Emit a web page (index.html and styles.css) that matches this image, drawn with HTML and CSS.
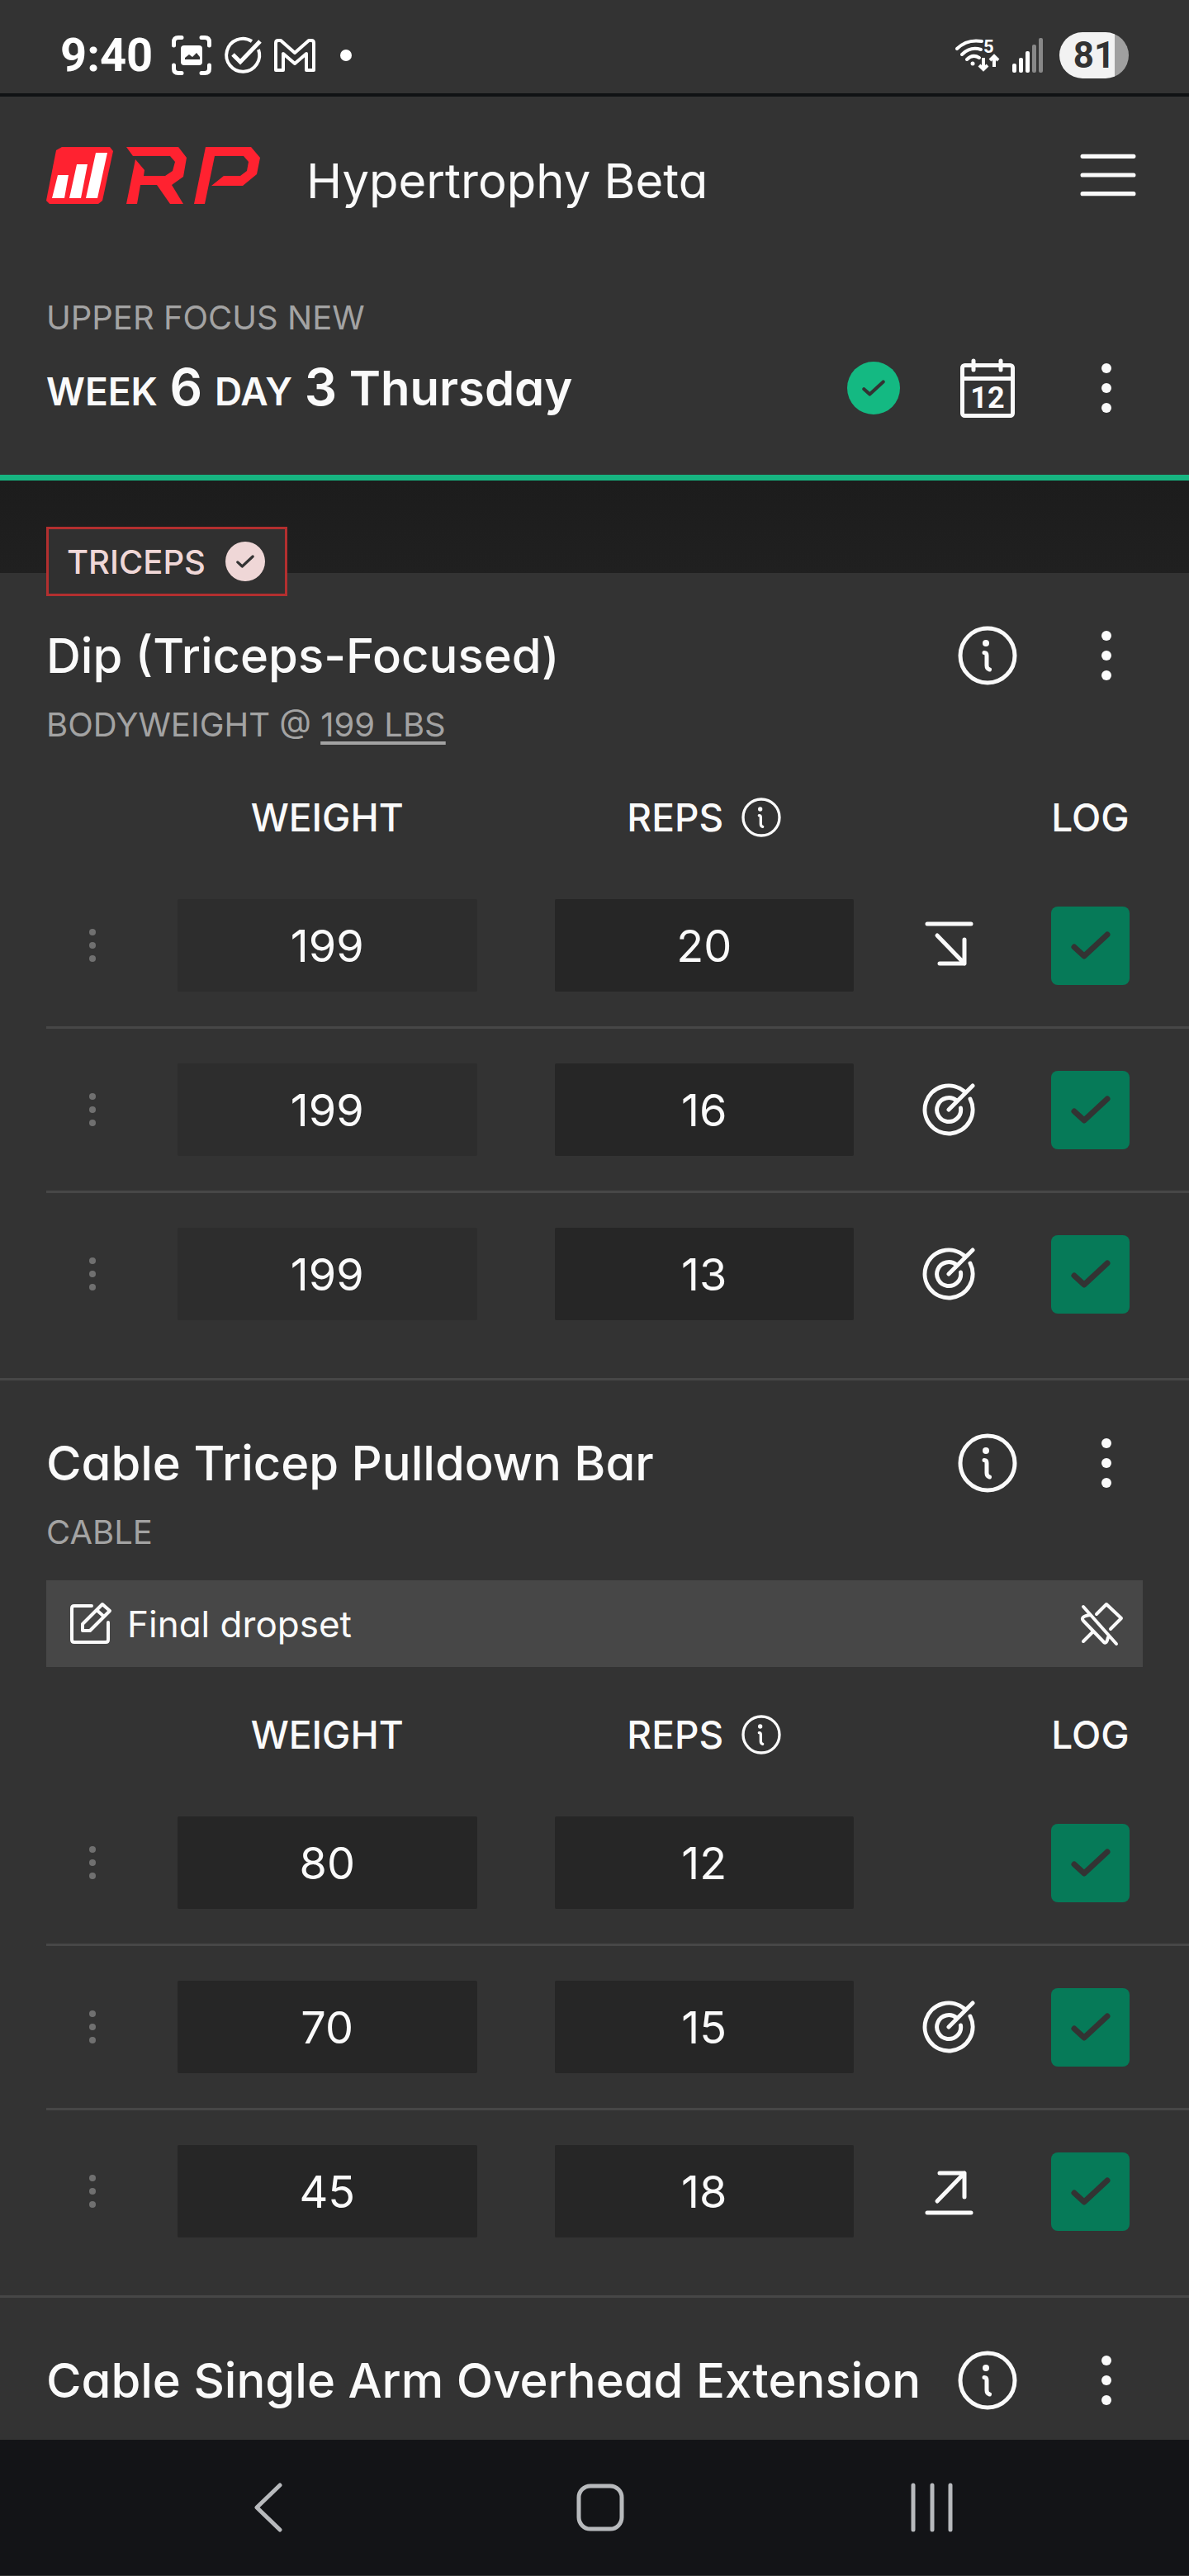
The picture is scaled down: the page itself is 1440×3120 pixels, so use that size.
FILE: index.html
```html
<!DOCTYPE html>
<html lang="en">
<head>
<meta charset="utf-8">
<meta name="viewport" content="width=device-width, initial-scale=1">
<title>Hypertrophy Beta</title>
<link rel="stylesheet" href="styles.css">
</head>
<body>
<svg class="sprite" aria-hidden="true">
  <symbol id="dots" viewBox="0 0 12 60"><circle cx="6" cy="6" r="6"/><circle cx="6" cy="30" r="6"/><circle cx="6" cy="54" r="6"/></symbol>
  <symbol id="info" viewBox="0 0 72 72"><circle cx="36" cy="36" r="33" fill="none" stroke="currentColor" stroke-width="5"/><circle cx="34" cy="21" r="4"/><path d="M32 32.500Q35 32.500 35 36V48Q35 52 38.500 53" fill="none" stroke="currentColor" stroke-width="5" stroke-linecap="round"/></symbol>
  <symbol id="tick" viewBox="0 0 48 36"><path d="M4 20L16 31L44 5" fill="none" stroke="currentColor" stroke-width="7" stroke-linecap="round" stroke-linejoin="round"/></symbol>
  <symbol id="target" viewBox="0 0 64 64"><path d="M51 10A29 29 0 1 0 58 19M41.500 21A14.500 14.500 0 1 0 46.500 30M32 32L61 3" fill="none" stroke="currentColor" stroke-width="5" stroke-linecap="round"/></symbol>
  <symbol id="below" viewBox="0 0 64 64"><path d="M6 6H59M18 20L51 54M51 25V54H21" fill="none" stroke="currentColor" stroke-width="5" stroke-linecap="round" stroke-linejoin="round"/></symbol>
  <symbol id="above" viewBox="0 0 64 64"><path d="M6 58H59M18 44L51 10M51 39V10H21" fill="none" stroke="currentColor" stroke-width="5" stroke-linecap="round" stroke-linejoin="round"/></symbol>
</svg>

<div class="status">
  <div class="status-group">
    <span class="clock">9:40</span>
    <svg class="line s-shot" viewBox="0 0 48 48" stroke-width="5" stroke-linecap="round"><path d="M2.500 12V8Q2.500 2.500 8 2.500H12M36 2.500H40Q45.500 2.500 45.500 8V12M45.500 36V40Q45.500 45.500 40 45.500H36M12 45.500H8Q2.500 45.500 2.500 40V36"/><rect x="11" y="12" width="26" height="24" rx="4" fill="#fff" stroke="none"/><path d="M16 29V27L21 23L25 26L30 21L34 26V29Z" fill="#333" stroke="none"/></svg>
    <svg class="line s-task" viewBox="0 0 46 46" stroke-width="4"><path d="M34 6A20 20 0 1 0 42 16"/><path d="M11 22L20 31L44 6" stroke-width="5"/></svg>
    <svg class="line s-mail" viewBox="0 0 50 40" stroke-width="4" stroke-linejoin="round"><path d="M2 5Q2 2 5 2H8L25 17L42 2H45Q48 2 48 5V38H39V18L25 30L11 18V38H2Z"/></svg>
    <span class="s-more"></span>
  </div>
  <div class="status-group">
    <svg class="line s-wifi" viewBox="0 0 54 40" stroke-width="4"><path d="M2 12Q14 0 32 3M8 19Q18 9 31 13M14 25Q21 18 29 23" stroke-linecap="round"/><circle cx="21" cy="30" r="2.500" fill="#fff" stroke="none"/><path d="M34 23V36M29 32L34 37L39 32M47 34V21M42 26L47 21L52 26"/><text x="34" y="17" font-size="22" font-weight="700" fill="#fff" stroke="none">5</text></svg>
    <svg class="s-bars" viewBox="0 0 38 42"><g fill="#fff"><rect y="31" width="5" height="11" rx="2"/><rect x="8" y="24" width="5" height="18" rx="2"/><rect x="16" y="16" width="5" height="26" rx="2"/></g><g fill="#888"><rect x="24" y="8" width="5" height="34" rx="2"/><rect x="32" width="5" height="42" rx="2"/></g></svg>
    <span class="battery">81</span>
  </div>
</div>

<header>
  <div class="appbar">
    <a class="brand" href="#" aria-label="RP Hypertrophy home"><svg viewBox="0 0 259 69"><path fill="#ff2230" d="M19 0H77L81 5L68 65L63 69H4L0 65L12 4Z"/><path fill="#fff" d="M14 34H27L22 62H7ZM37 21H50L42 62H28ZM60 7H74L62 62H48Z"/><path fill="#ff2230" d="M97 0H160L170 13L166 36L152 46L166 69H150L134 46H114L110 69H97L108 15L119 28L118 35H144L153 29L156 18L150 11H105Z"/><path fill="#ff2230" d="M193 0H248L259 13L255 33L238 47H200L215 35H235L243 29L245 18L239 11H204L192 69H179Z"/></svg></a>
    <span class="app-name">Hypertrophy Beta</span>
    <button class="menu" type="button" aria-label="Menu"><svg viewBox="0 0 66 50"><path d="M3 3H63M3 25H63M3 47H63" stroke="currentColor" stroke-width="5" stroke-linecap="round"/></svg></button>
  </div>
  <div class="day">
    <p class="label">UPPER FOCUS NEW</p>
    <div class="title-row">
      <h1><small>WEEK</small> <b>6</b> <small>DAY</small> <b>3</b> Thursday</h1>
      <span class="done" role="img" aria-label="Completed"><svg><use href="#tick"/></svg></span>
      <button class="icon-btn" type="button" aria-label="Calendar"><svg class="calendar" viewBox="0 0 72 78"><g fill="none" stroke="currentColor" stroke-width="5"><rect x="5.500" y="8.500" width="61" height="61" rx="3"/><path d="M5.500 24.500H66.500"/><path d="M19 3V14M52 3V14" stroke-linecap="round"/></g><text x="36" y="60" text-anchor="middle">12</text></svg></button>
      <button class="icon-btn" type="button" aria-label="Workout options"><svg class="dots"><use href="#dots"/></svg></button>
    </div>
  </div>
</header>

<main>
  <div class="band">
    <h2 class="muscle">TRICEPS <span class="muscle-done"><svg><use href="#tick"/></svg></span></h2>
  </div>

  <section class="exercise">
    <div class="title-row">
      <h3>Dip (Triceps-Focused)</h3>
      <button class="icon-btn" type="button" aria-label="Exercise info"><svg class="info"><use href="#info"/></svg></button>
      <button class="icon-btn" type="button" aria-label="Exercise options"><svg class="dots"><use href="#dots"/></svg></button>
    </div>
    <p class="label">BODYWEIGHT @ <a href="#">199 LBS</a></p>
    <table>
      <colgroup><col class="c-drag"><col><col><col class="c-goal"><col class="c-log"></colgroup>
      <thead><tr><td></td><th>WEIGHT</th><th><span class="reps">REPS <svg><use href="#info"/></svg></span></th><td></td><th class="log">LOG</th></tr></thead>
      <tbody>
        <tr><td><button class="drag" type="button" aria-label="Set options"><svg><use href="#dots"/></svg></button></td><td class="field"><input type="text" value="199" aria-label="Weight, set 1" disabled></td><td class="field"><input type="text" value="20" aria-label="Reps, set 1"></td><td><svg class="goal"><use href="#below"/></svg></td><td class="log"><label class="check"><input type="checkbox" aria-label="Log set 1" checked><svg><use href="#tick"/></svg></label></td></tr>
        <tr><td><button class="drag" type="button" aria-label="Set options"><svg><use href="#dots"/></svg></button></td><td class="field"><input type="text" value="199" aria-label="Weight, set 2" disabled></td><td class="field"><input type="text" value="16" aria-label="Reps, set 2"></td><td><svg class="goal"><use href="#target"/></svg></td><td class="log"><label class="check"><input type="checkbox" aria-label="Log set 2" checked><svg><use href="#tick"/></svg></label></td></tr>
        <tr><td><button class="drag" type="button" aria-label="Set options"><svg><use href="#dots"/></svg></button></td><td class="field"><input type="text" value="199" aria-label="Weight, set 3" disabled></td><td class="field"><input type="text" value="13" aria-label="Reps, set 3"></td><td><svg class="goal"><use href="#target"/></svg></td><td class="log"><label class="check"><input type="checkbox" aria-label="Log set 3" checked><svg><use href="#tick"/></svg></label></td></tr>
      </tbody>
    </table>
  </section>

  <section class="exercise">
    <div class="title-row">
      <h3>Cable Tricep Pulldown Bar</h3>
      <button class="icon-btn" type="button" aria-label="Exercise info"><svg class="info"><use href="#info"/></svg></button>
      <button class="icon-btn" type="button" aria-label="Exercise options"><svg class="dots"><use href="#dots"/></svg></button>
    </div>
    <p class="label">CABLE</p>
    <div class="note">
      <svg class="line" viewBox="0 0 52 52" stroke-width="4" stroke-linejoin="round"><path d="M27 4H6Q3 4 3 7V45Q3 48 6 48H44Q47 48 47 45V24" stroke-linecap="round"/><path d="M16 26L40 2L49 10L25 34H16ZM33 9L42 17"/></svg>
      <span>Final dropset</span>
      <button type="button" aria-label="Unpin note"><svg class="line" viewBox="0 0 52 52" stroke-width="4" stroke-linecap="round" stroke-linejoin="round"><path d="M4 5L44 50M20 14L32 2L50 19L37 32M12 15C4 16 1 19 4 22L29 48Q32 51 34 42M16 35L4 47"/></svg></button>
    </div>
    <table>
      <colgroup><col class="c-drag"><col><col><col class="c-goal"><col class="c-log"></colgroup>
      <thead><tr><td></td><th>WEIGHT</th><th><span class="reps">REPS <svg><use href="#info"/></svg></span></th><td></td><th class="log">LOG</th></tr></thead>
      <tbody>
        <tr><td><button class="drag" type="button" aria-label="Set options"><svg><use href="#dots"/></svg></button></td><td class="field"><input type="text" value="80" aria-label="Weight, set 1"></td><td class="field"><input type="text" value="12" aria-label="Reps, set 1"></td><td></td><td class="log"><label class="check"><input type="checkbox" aria-label="Log set 1" checked><svg><use href="#tick"/></svg></label></td></tr>
        <tr><td><button class="drag" type="button" aria-label="Set options"><svg><use href="#dots"/></svg></button></td><td class="field"><input type="text" value="70" aria-label="Weight, set 2"></td><td class="field"><input type="text" value="15" aria-label="Reps, set 2"></td><td><svg class="goal"><use href="#target"/></svg></td><td class="log"><label class="check"><input type="checkbox" aria-label="Log set 2" checked><svg><use href="#tick"/></svg></label></td></tr>
        <tr><td><button class="drag" type="button" aria-label="Set options"><svg><use href="#dots"/></svg></button></td><td class="field"><input type="text" value="45" aria-label="Weight, set 3"></td><td class="field"><input type="text" value="18" aria-label="Reps, set 3"></td><td><svg class="goal"><use href="#above"/></svg></td><td class="log"><label class="check"><input type="checkbox" aria-label="Log set 3" checked><svg><use href="#tick"/></svg></label></td></tr>
      </tbody>
    </table>
  </section>

  <section class="exercise exercise-last">
    <div class="title-row">
      <h3>Cable Single Arm Overhead Extension</h3>
      <button class="icon-btn" type="button" aria-label="Exercise info"><svg class="info"><use href="#info"/></svg></button>
      <button class="icon-btn" type="button" aria-label="Exercise options"><svg class="dots"><use href="#dots"/></svg></button>
    </div>
  </section>
</main>

<nav class="system-nav">
  <button type="button" aria-label="Back"><svg viewBox="0 0 58 58"><path d="M43 2L15 29L43 56"/></svg></button>
  <button type="button" aria-label="Home"><svg viewBox="0 0 58 58"><rect x="3" y="3" width="52" height="52" rx="14"/></svg></button>
  <button type="button" aria-label="Recent apps"><svg viewBox="0 0 58 58"><path d="M6 2V56M29 2V56M51 2V56"/></svg></button>
</nav>
</body>
</html>
```
FILE: styles.css
```css
* { box-sizing: border-box; }

body {
  margin: 0;
  background: #333;
  color: #fafafa;
  font-family: Inter, "Open Sans", sans-serif;
  font-feature-settings: "cv11";
}

h1, h2, h3, p { margin: 0; }

button {
  display: grid;
  place-items: center;
  padding: 0;
  border: 0;
  background: none;
  color: inherit;
}

svg { display: block; fill: currentColor; overflow: visible; }
.line { fill: none; stroke: currentColor; }
.sprite { display: none; }

/* Phone status bar */
.status {
  display: flex;
  justify-content: space-between;
  padding: 39px 73px 18px;
  border-bottom: 4px solid #101214;
  color: #fff;
  font-family: Roboto, sans-serif;
}
.status-group { display: flex; align-items: center; height: 56px; gap: 15px; }
.clock { margin-right: 8px; font-size: 56px; font-weight: 700; line-height: 56px; }
.s-shot { width: 48px; height: 48px; }
.s-task { width: 46px; height: 46px; }
.s-mail { width: 50px; height: 40px; }
.s-more { width: 14px; height: 14px; margin-left: 15px; border-radius: 50%; background: #fff; }
.s-wifi { width: 54px; height: 40px; }
.s-bars { width: 38px; height: 42px; margin-right: 4px; }
.battery {
  width: 84px;
  height: 56px;
  border-radius: 28px;
  background: linear-gradient(90deg, #f2f2f2 80%, #a0a0a0 80%);
  color: #333;
  font-size: 44px;
  font-weight: 700;
  line-height: 56px;
  text-align: center;
}

/* App header */
header { border-bottom: 7px solid #17b581; }
.appbar { display: flex; align-items: center; padding: 60px 64px 61px 56px; }
.brand svg { width: 259px; height: 69px; }
.app-name { flex: 1; margin-left: 56px; padding-top: 14px; font-size: 58px; line-height: 56px; }
.menu svg { width: 68px; height: 52px; }

.day { padding: 47px 56px 63px; }
.label { color: #a3a3a3; font-size: 40px; line-height: 60px; }
.label a { color: inherit; text-underline-offset: 6px; text-decoration-thickness: 4px; }

.title-row { display: flex; align-items: center; gap: 56px; }
.title-row h1 { flex: 1; font-size: 58px; font-weight: 600; line-height: 84px; }
.title-row h3 { flex: 1; font-size: 58px; font-weight: 500; line-height: 72px; white-space: nowrap; }
h1 small { font-size: 46px; line-height: 48px; }
h1 b { font-size: 62px; line-height: 64px; font-weight: 600; }
.day .title-row { margin-top: 13px; }

.icon-btn { width: 88px; height: 72px; flex: none; }
.dots { width: 12px; height: 60px; }
.info { width: 72px; height: 72px; }
.calendar { width: 72px; height: 78px; }
.calendar text { font-family: Roboto, sans-serif; font-size: 36px; font-weight: 700; }
.done { display: grid; place-items: center; width: 76px; flex: none; }
.done svg {
  width: 64px;
  height: 64px;
  padding: 18px;
  border-radius: 50%;
  background: #14b982;
  color: #333;
}

/* Muscle group */
.band {
  position: relative;
  height: 112px;
  background: linear-gradient(#1c1c1c, #202020);
}
.muscle {
  position: absolute;
  top: 56px;
  left: 56px;
  display: flex;
  align-items: center;
  gap: 24px;
  height: 84px;
  padding: 0 24px 0 22px;
  border: 3px solid #b32f2f;
  background: #303030;
  color: #efd7d7;
  font-size: 40px;
  font-weight: 500;
}
.muscle-done svg {
  width: 48px;
  height: 48px;
  padding: 13px;
  border-radius: 50%;
  background: #efd7d7;
  color: #333;
}

/* Exercises */
.exercise { padding: 64px 0 28px 56px; border-bottom: 3px solid #474747; }
.exercise .title-row { gap: 56px; margin-right: 56px; }
.exercise .title-row h3 { min-width: 0; margin-right: -24px; }
.exercise .label { margin-top: 18px; }
.exercise-last { padding-bottom: 36px; border-bottom: 0; }

.note {
  display: flex;
  align-items: center;
  gap: 18px;
  height: 105px;
  margin: 28px 56px 0 0;
  padding: 0 24px 0 28px;
  background: #474747;
  font-size: 44px;
}
.note svg { width: 52px; height: 52px; }
.note span { flex: 1; }

table { width: 100%; margin-top: 46px; border-spacing: 0; table-layout: fixed; }
.c-drag { width: 112px; }
.c-goal { width: 136px; }
.c-log { width: 223px; }
th { padding: 0 0 21px; font-size: 46px; font-weight: 500; line-height: 72px; }
td { padding: 0; }
tbody td { padding: 42px 0; border-bottom: 3px solid #474747; }
tbody tr:last-child td { border-bottom: 0; }
tbody .field { padding: 42px 47px; }
th.log, tbody td.log { padding-right: 16px; }

.reps { display: flex; align-items: center; justify-content: center; gap: 22px; }
.reps svg { width: 48px; height: 48px; }

.drag { width: 100%; height: 112px; color: #707070; }
.drag svg { width: 8px; height: 48px; }

input[type="text"] {
  display: block;
  width: 100%;
  height: 112px;
  padding: 0;
  border: 0;
  border-radius: 2px;
  background: #262626;
  color: #fafafa;
  font: inherit;
  font-size: 54px;
  text-align: center;
}
input[type="text"]:disabled { background: #2d2d2d; }

.goal { width: 64px; height: 64px; margin: 0 auto; }

.check { display: grid; place-items: center; width: 95px; height: 95px; margin: 0 auto; color: #333; }
.check input, .check svg { grid-area: 1 / 1; }
.check input {
  width: 95px;
  height: 95px;
  margin: 0;
  border-radius: 8px;
  background: #555;
  appearance: none;
}
.check input:checked { background: #067a58; }
.check svg { width: 48px; height: 36px; pointer-events: none; }

/* Phone navigation bar */
.system-nav {
  display: grid;
  grid-template-columns: repeat(3, 1fr);
  height: 164px;
  padding: 0 110px 0 124px;
  background: #131417;
}
.system-nav svg {
  width: 58px;
  height: 58px;
  fill: none;
  stroke: #b8babd;
  stroke-width: 5;
  stroke-linecap: round;
  stroke-linejoin: round;
}
```
